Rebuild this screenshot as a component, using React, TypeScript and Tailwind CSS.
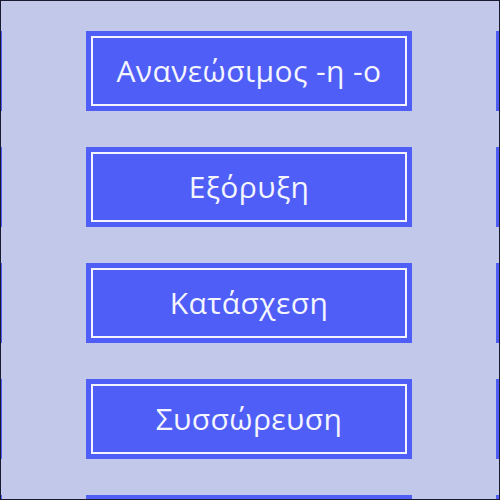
import React from "react";

const items = ["Ανανεώσιμος -η -ο", "Εξόρυξη", "Κατάσχεση", "Συσσώρευση", ""];

function Column({ labels }: { labels: string[] }) {
  return (
    <div className="flex w-[326px] shrink-0 flex-col gap-[36px]">
      {labels.map((t, i) => (
        <div key={i} className="h-[80px] w-[326px] shrink-0 bg-[#4f5ef6] p-[5px]">
          <div className="flex h-full w-full items-center justify-center border-2 border-[#f2f3ff]">
            <span className="whitespace-pre text-[30px] leading-none tracking-[0.4px] text-[#f4f5ff]" style={{ fontFamily: '"Open Sans", "Noto Sans", sans-serif' }}>
              {t}
            </span>
          </div>
        </div>
      ))}
    </div>
  );
}

export default function App() {
  return (
    <div className="h-[500px] w-[500px] overflow-hidden border border-[#1a1a2e] bg-[#c1c8ea]">
      <div className="-ml-[2px] flex justify-center gap-[84px] pt-[30px]">
        <Column labels={["", "", "", "", ""]} />
        <Column labels={items} />
        <Column labels={["", "", "", "", ""]} />
      </div>
    </div>
  );
}
